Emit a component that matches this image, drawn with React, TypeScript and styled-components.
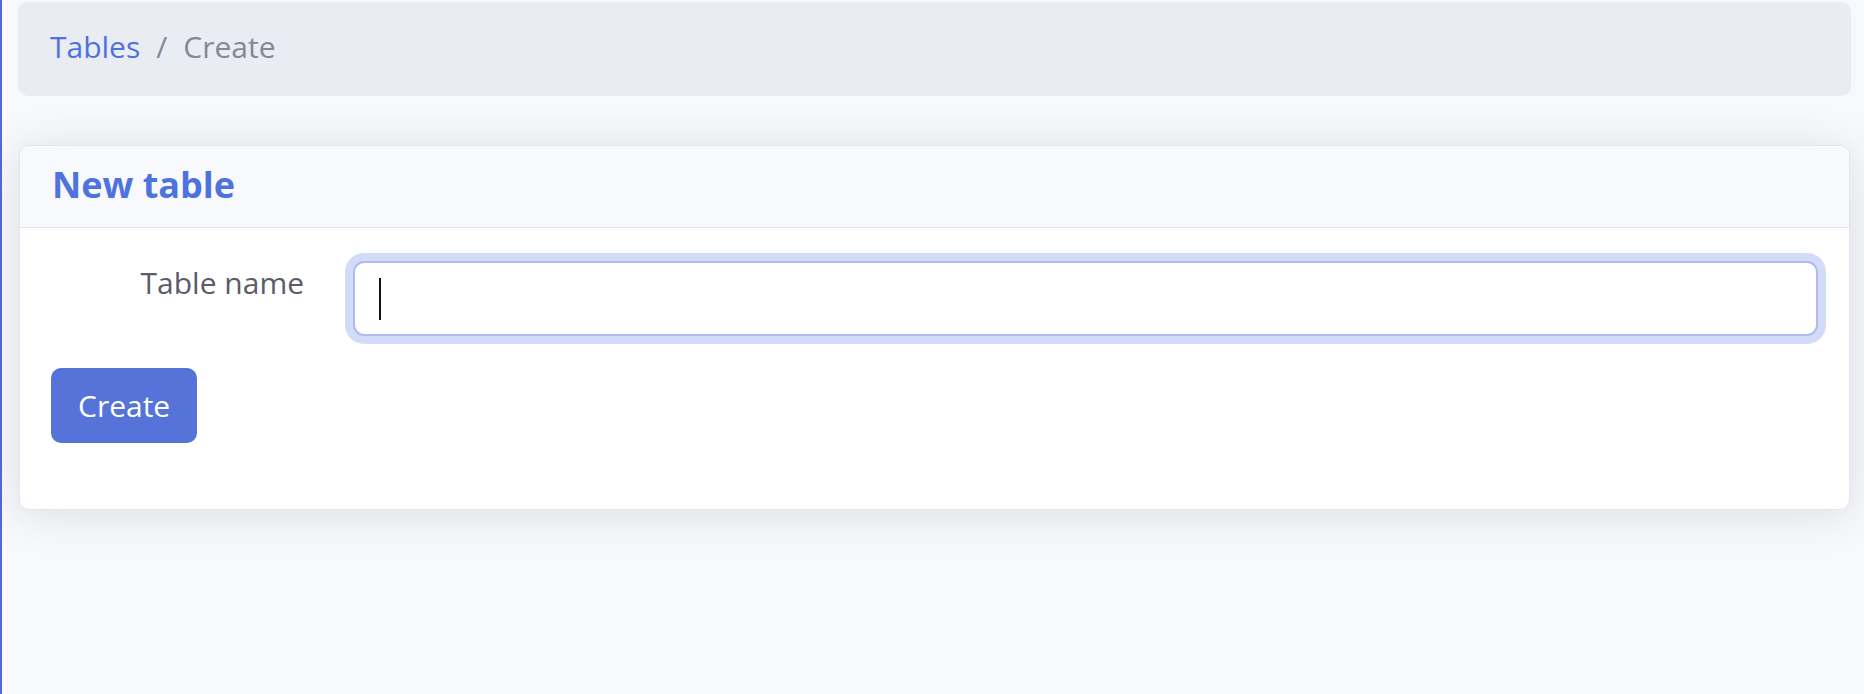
import styled, { createGlobalStyle } from 'styled-components'

const GlobalStyle = createGlobalStyle`
    html, body {
        margin: 0;
        padding: 0;
        background: #f8f9fc;
    }
    body {
        font-family: "Open Sans", "Noto Sans", Arial, sans-serif;
    }
`;

const Page = styled.div`
    min-height: 694px;
    box-sizing: border-box;
    border-left: 2px solid #4e6bd8;
    background: #f8f9fc;
    padding: 2px 13px 0 16px;
`;

const Breadcrumb = styled.nav`
    height: 94px;
    box-sizing: border-box;
    background: #eaecf4;
    border-radius: 10px;
    padding: 0 32px 5px 32px;
    display: flex;
    align-items: center;
    gap: 16px;
    font-size: 30px;
    line-height: 1;
    color: #858796;
`;

const Crumb = styled.span<{ active?: boolean }>`
    color: ${props => props.active ? '#858796' : '#4e73df'};
`;

const Card = styled.section`
    margin: 49px 1px 0 1px;
    background: #fff;
    border: 1px solid #e3e6f0;
    border-radius: 10px;
    box-shadow: 0 4px 44px rgba(58, 59, 69, 0.15);
    overflow: hidden;
`;

const CardHeader = styled.header`
    height: 82px;
    box-sizing: border-box;
    background: #f8f9fc;
    border-bottom: 1px solid #e3e6f0;
    padding: 0 32px 4px 32px;
    display: flex;
    align-items: center;
`;

const CardTitle = styled.h2`
    margin: 0;
    font-size: 36px;
    font-weight: 700;
    color: #4e73df;
    line-height: 1;
`;

const CardBody = styled.div`
    padding: 33px 31px 34px 31px;
`;

const FormRow = styled.div`
    display: grid;
    grid-template-columns: 253px 1fr;
    column-gap: 49px;
    align-items: start;
    margin-bottom: 32px;
`;

const Label = styled.label`
    text-align: right;
    font-size: 30px;
    line-height: 44px;
    color: #5a5c69;
`;

const InputBox = styled.div`
    height: 75px;
    box-sizing: border-box;
    border: 2px solid #aebbee;
    border-radius: 11px;
    box-shadow: 0 0 0 8px rgba(78, 115, 223, 0.25);
    background: #fff;
    padding: 0 24px;
    display: flex;
    align-items: center;
`;

const Caret = styled.span`
    display: block;
    width: 2px;
    height: 42px;
    background: #111;
`;

const Button = styled.button`
    height: 75px;
    padding: 0 27px;
    border: none;
    border-radius: 10px;
    background: #5673d9;
    color: #fff;
    font-family: inherit;
    font-size: 30px;
    margin-bottom: 32px;
    cursor: pointer;
`;

export default function App() {
    return (
        <>
            <GlobalStyle />
            <Page>
                <Breadcrumb>
                    <Crumb>Tables</Crumb>
                    <span>/</span>
                    <Crumb active>Create</Crumb>
                </Breadcrumb>
                <Card>
                    <CardHeader>
                        <CardTitle>New table</CardTitle>
                    </CardHeader>
                    <CardBody>
                        <FormRow>
                            <Label>Table name</Label>
                            <InputBox>
                                <Caret />
                            </InputBox>
                        </FormRow>
                        <Button>Create</Button>
                    </CardBody>
                </Card>
            </Page>
        </>
    );
}
